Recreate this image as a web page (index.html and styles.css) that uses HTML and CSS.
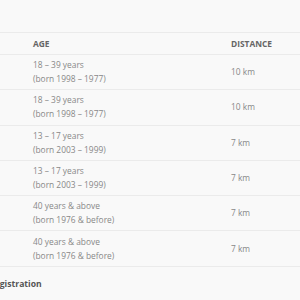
FILE: index.html
```html
<!DOCTYPE html>
<html>
<head>
<meta charset="utf-8">
<link rel="stylesheet" href="styles.css">
</head>
<body>
<div class="page">
  <table class="races">
    <thead>
      <tr><th class="age">Age</th><th class="dist">Distance</th></tr>
    </thead>
    <tbody>
      <tr><td class="age">18 – 39 years<br>(born 1998 – 1977)</td><td class="dist">10 km</td></tr>
      <tr><td class="age">18 – 39 years<br>(born 1998 – 1977)</td><td class="dist">10 km</td></tr>
      <tr><td class="age">13 – 17 years<br>(born 2003 – 1999)</td><td class="dist">7 km</td></tr>
      <tr><td class="age">13 – 17 years<br>(born 2003 – 1999)</td><td class="dist">7 km</td></tr>
      <tr><td class="age">40 years &amp; above<br>(born 1976 &amp; before)</td><td class="dist">7 km</td></tr>
      <tr><td class="age">40 years &amp; above<br>(born 1976 &amp; before)</td><td class="dist">7 km</td></tr>
    </tbody>
  </table>
  <h3 class="section-title">Registration</h3>
</div>
</body>
</html>
```
FILE: styles.css
```css
html, body {
  margin: 0;
  padding: 0;
  background: #f9f9f9;
  overflow: hidden;
}
body {
  font-family: "Open Sans", "DejaVu Sans", sans-serif;
  font-size: 8.4px;
  color: #888888;
}
.page {
  width: 320px;
  padding-top: 32px;
}
.races {
  width: 100%;
  border-collapse: collapse;
  border-top: 1px solid #ebebeb;
}
.races th, .races td {
  text-align: left;
  border-bottom: 1px solid #ebebeb;
  vertical-align: middle;
  padding: 0;
}
.races th {
  font-weight: 700;
  text-transform: uppercase;
  color: #666666;
  line-height: 14px;
  padding-top: 3.5px;
  padding-bottom: 3.5px;
}
.races td {
  line-height: 14px;
  padding-top: 3.2px;
  padding-bottom: 3.1px;
}
.races .age {
  padding-left: 33px;
  width: 198px;
}
.races .dist {
  padding-left: 0;
}
.section-title {
  margin: 0 0 0 -11px;
  padding-top: 10px;
  font-size: 8.6px;
  font-weight: 700;
  color: #555555;
  line-height: 14px;
}
```
